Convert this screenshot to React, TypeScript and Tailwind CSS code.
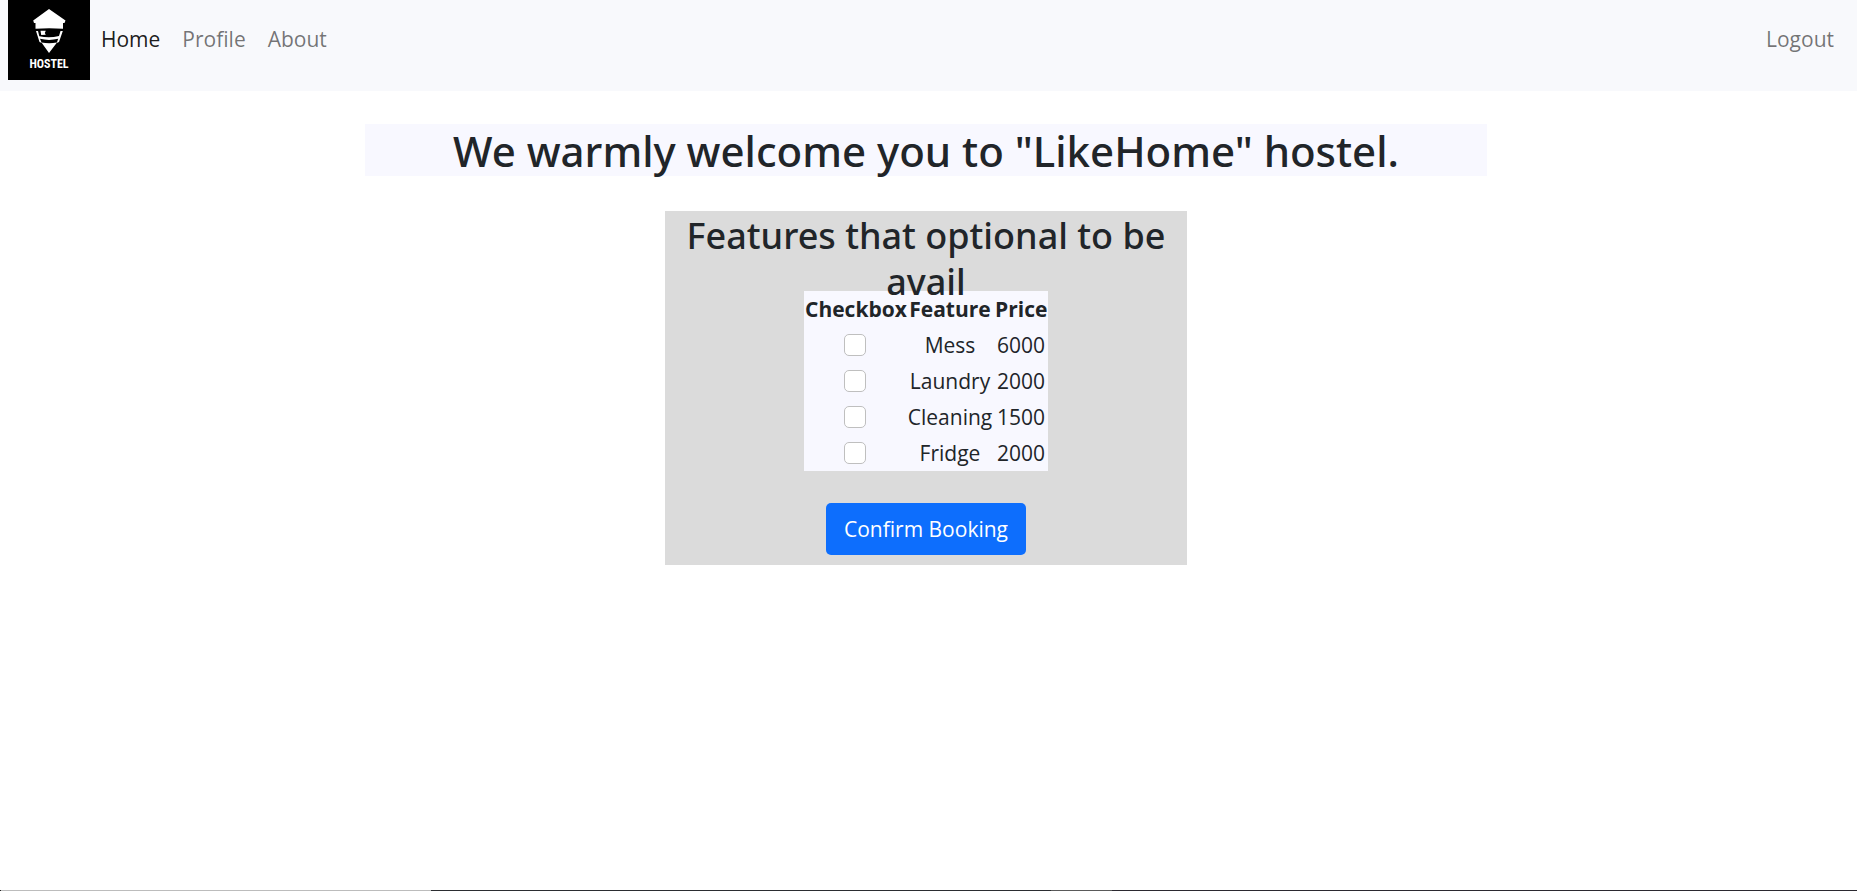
import React from 'react';

const features = [
  { id: 'mess', name: 'Mess', price: 6000 },
  { id: 'laundry', name: 'Laundry', price: 2000 },
  { id: 'cleaning', name: 'Cleaning', price: 1500 },
  { id: 'fridge', name: 'Fridge', price: 2000 },
];

function Logo() {
  return (
    <a href="#home" aria-label="Hostel" className="relative block h-20 w-[82px] bg-black">
      <svg viewBox="0 0 82 80" className="h-full w-full" aria-hidden="true">
        <path d="M41 9 57.500 20.500 56.500 23H55v5.800Q41 27.500 27.500 28.800V23H26l-.8-2.500z" fill="#fff" />
        <path d="M28 31h2l1.300 5.200Q41 38.500 51 36l1.500-5h2.300L51 42l-2.300 1 1.500-4.200Q41 41 32 38.800L33.800 43 31.500 42z" fill="#fff" />
        <path d="M32.500 30.800h5.300l-1 2.200 1 1.700-4.600.3z" fill="#fff" />
        <path d="M33.500 42.500Q41 44 49 42.500L41 53z" fill="#fff" />
      </svg>
      <span className="absolute inset-x-0 bottom-[9px] text-center font-['Liberation_Sans_Narrow','Roboto_Condensed',sans-serif] text-[12px] leading-[14px] font-bold text-white">
        HOSTEL
      </span>
    </a>
  );
}

function NavLink({ href, active, children }: { href: string; active?: boolean; children: React.ReactNode }) {
  return (
    <a href={href} className={active ? 'px-[11px] text-black/90' : 'px-[11px] text-black/55'}>
      {children}
    </a>
  );
}

export default function App() {
  return (
    <div className="flex min-h-screen flex-col bg-white font-['Open_Sans',sans-serif] text-[21px] leading-[34px] text-[#212529]">
      <nav className="flex h-[91px] items-start bg-[#f8f9fc] pr-3 pl-2">
        <Logo />
        <div className="flex flex-1 pt-[22px]">
          <NavLink href="#home" active>Home</NavLink>
          <NavLink href="#profile">Profile</NavLink>
          <NavLink href="#about">About</NavLink>
          <div className="ml-auto">
            <NavLink href="#logout">Logout</NavLink>
          </div>
        </div>
      </nav>

      <main className="flex flex-1 flex-col items-center pt-[33px] pr-[5px]">
        <h1 className="w-[60.6%] bg-[#f8f8ff] pt-0.5 text-center font-['Noto_Sans','Open_Sans',sans-serif] text-[42px] leading-[50px] font-medium">
          We warmly welcome you to "LikeHome" hostel.
        </h1>

        <form className="mt-[35px] flex w-[522px] flex-col items-center bg-[#dbdbdb] pb-[10px]" onSubmit={(e) => e.preventDefault()}>
          <h2 className="relative z-10 -mb-3.5 px-2 pt-0.5 text-center font-['Noto_Sans','Open_Sans',sans-serif] text-[36px] leading-[46px] font-medium">
            Features that optional to be avail
          </h2>
          <table className="w-[244px] table-fixed bg-[#f8f8ff] text-center whitespace-nowrap">
            <colgroup>
              <col className="w-[102px]" />
              <col className="w-[88px]" />
              <col className="w-[54px]" />
            </colgroup>
            <thead>
              <tr className="h-9">
                <th className="p-px">Checkbox</th>
                <th className="p-px">Feature</th>
                <th className="p-px">Price</th>
              </tr>
            </thead>
            <tbody>
              {features.map((f) => (
                <tr key={f.id} className="h-9">
                  <td className="p-px">
                    <input
                      id={f.id}
                      type="checkbox"
                      className="mx-auto block size-[22px] appearance-none rounded-[5px] border border-[#bfbfbf] bg-white checked:bg-[#0d6efd]"
                    />
                  </td>
                  <td className="p-px">
                    <label htmlFor={f.id}>{f.name}</label>
                  </td>
                  <td className="p-px">{f.price}</td>
                </tr>
              ))}
            </tbody>
          </table>
          <button type="submit" className="mt-8 h-[52px] w-[200px] rounded-[5px] bg-[#0d6efd] text-white">
            Confirm Booking
          </button>
        </form>
      </main>

      <div className="flex h-px" aria-hidden="true">
        <div className="w-px bg-[#222]" />
        <div className="w-[430px] bg-[#bcbcbc]" />
        <div className="w-[620px] bg-[#2b2d31]" />
        <div className="w-[61px] bg-[#5a5a5a]" />
        <div className="flex-1 bg-[#2b2930]" />
      </div>
    </div>
  );
}
